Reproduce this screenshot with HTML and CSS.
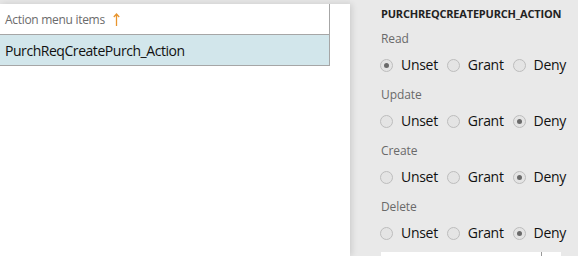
FILE: index.html
```html
<!DOCTYPE html>
<html>
<head>
<meta charset="utf-8">
<link rel="stylesheet" href="styles.css">
</head>
<body>
<div class="page">
  <div class="left">
    <div class="grid">
      <div class="grid-head">Action menu items <svg class="sort" width="7" height="13" viewBox="0 0 7 13"><path d="M3.5 1 V13 M0.8 4 L3.5 1 L6.2 4" fill="none" stroke="#e8952e" stroke-width="1.3"/></svg></div>
      <div class="grid-row">PurchReqCreatePurch_Action</div>
    </div>
  </div>
  <div class="right">
    <div class="title">PURCHREQCREATEPURCH_ACTION</div>
    <div class="group">
      <div class="label">Read</div>
      <div class="radios">
        <span class="opt"><span class="radio checked"></span>Unset</span>
        <span class="opt"><span class="radio"></span>Grant</span>
        <span class="opt"><span class="radio"></span>Deny</span>
      </div>
    </div>
    <div class="group">
      <div class="label">Update</div>
      <div class="radios">
        <span class="opt"><span class="radio"></span>Unset</span>
        <span class="opt"><span class="radio"></span>Grant</span>
        <span class="opt"><span class="radio checked"></span>Deny</span>
      </div>
    </div>
    <div class="group">
      <div class="label">Create</div>
      <div class="radios">
        <span class="opt"><span class="radio"></span>Unset</span>
        <span class="opt"><span class="radio"></span>Grant</span>
        <span class="opt"><span class="radio checked"></span>Deny</span>
      </div>
    </div>
    <div class="group">
      <div class="label">Delete</div>
      <div class="radios">
        <span class="opt"><span class="radio"></span>Unset</span>
        <span class="opt"><span class="radio"></span>Grant</span>
        <span class="opt"><span class="radio checked"></span>Deny</span>
      </div>
    </div>
    <div class="input"><div class="input-field"></div><div class="input-btn"></div></div>
  </div>
</div>
</body>
</html>
```
FILE: styles.css
```css
html, body {
  margin: 0;
  padding: 0;
  height: 256px;
  overflow: hidden;
}
body {
  background: #e6e6e6;
  font-family: "Open Sans", "Noto Sans", sans-serif;
  color: #000;
}
.page {
  display: flex;
  height: 256px;
  overflow: hidden;
}
.left {
  width: 350px;
  margin-top: 4px;
  background: #fff;
  box-shadow: 2px 0 6px rgba(0,0,0,0.12);
  position: relative;
  z-index: 1;
}
.grid {
  width: 330px;
}
.grid-head {
  height: 30px;
  display: flex;
  align-items: center;
  padding-left: 5px;
  font-size: 12px;
  color: #6b6b6b;
  border-right: 1px solid #a6a6a6;
  border-bottom: 1px solid #a6a6a6;
  letter-spacing: -0.3px;
}
.sort {
  margin-left: 8px;
  margin-top: 1px;
}
.grid-row {
  height: 30px;
  line-height: 31px;
  padding-left: 5px;
  font-size: 14px;
  background: #d2e6eb;
  color: #111;
  border-right: 1px solid #a6a6a6;
  border-bottom: 1px solid #a6a6a6;
  letter-spacing: -0.45px;
}
.right {
  flex: 1;
  background: #e9e9e9;
  padding-left: 31px;
  padding-top: 6px;
}
.title {
  font-size: 11px;
  font-weight: bold;
  color: #222;
  height: 16px;
  line-height: 16px;
  letter-spacing: -0.2px;
}
.label {
  font-size: 12px;
  color: #6a6a6a;
  height: 17px;
  line-height: 17px;
  margin-top: 12px;
  letter-spacing: -0.1px;
}
.title + .group .label {
  margin-top: 8px;
}
.radios {
  display: flex;
  height: 20px;
  align-items: center;
  margin-top: 7px;
  font-size: 14px;
  color: #111;
  letter-spacing: -0.3px;
}
.opt {
  display: flex;
  align-items: center;
  margin-right: 10px;
}
.radio {
  width: 13px;
  height: 13px;
  border-radius: 50%;
  border: 1px solid #bdbdbd;
  background: #e4e4e4;
  box-sizing: border-box;
  margin-right: 8px;
  margin-left: -1px;
  margin-top: 3px;
  position: relative;
}
.radio.checked::after {
  content: "";
  position: absolute;
  left: 3px;
  top: 3px;
  width: 5px;
  height: 5px;
  border-radius: 50%;
  background: #6a6a6a;
}
.input {
  display: flex;
  margin-top: 10px;
  width: 180px;
  height: 20px;
  background: #fff;
}
.input-field {
  width: 160px;
  border-right: 1px solid #999;
}
.input-btn {
  flex: 1;
}
```
